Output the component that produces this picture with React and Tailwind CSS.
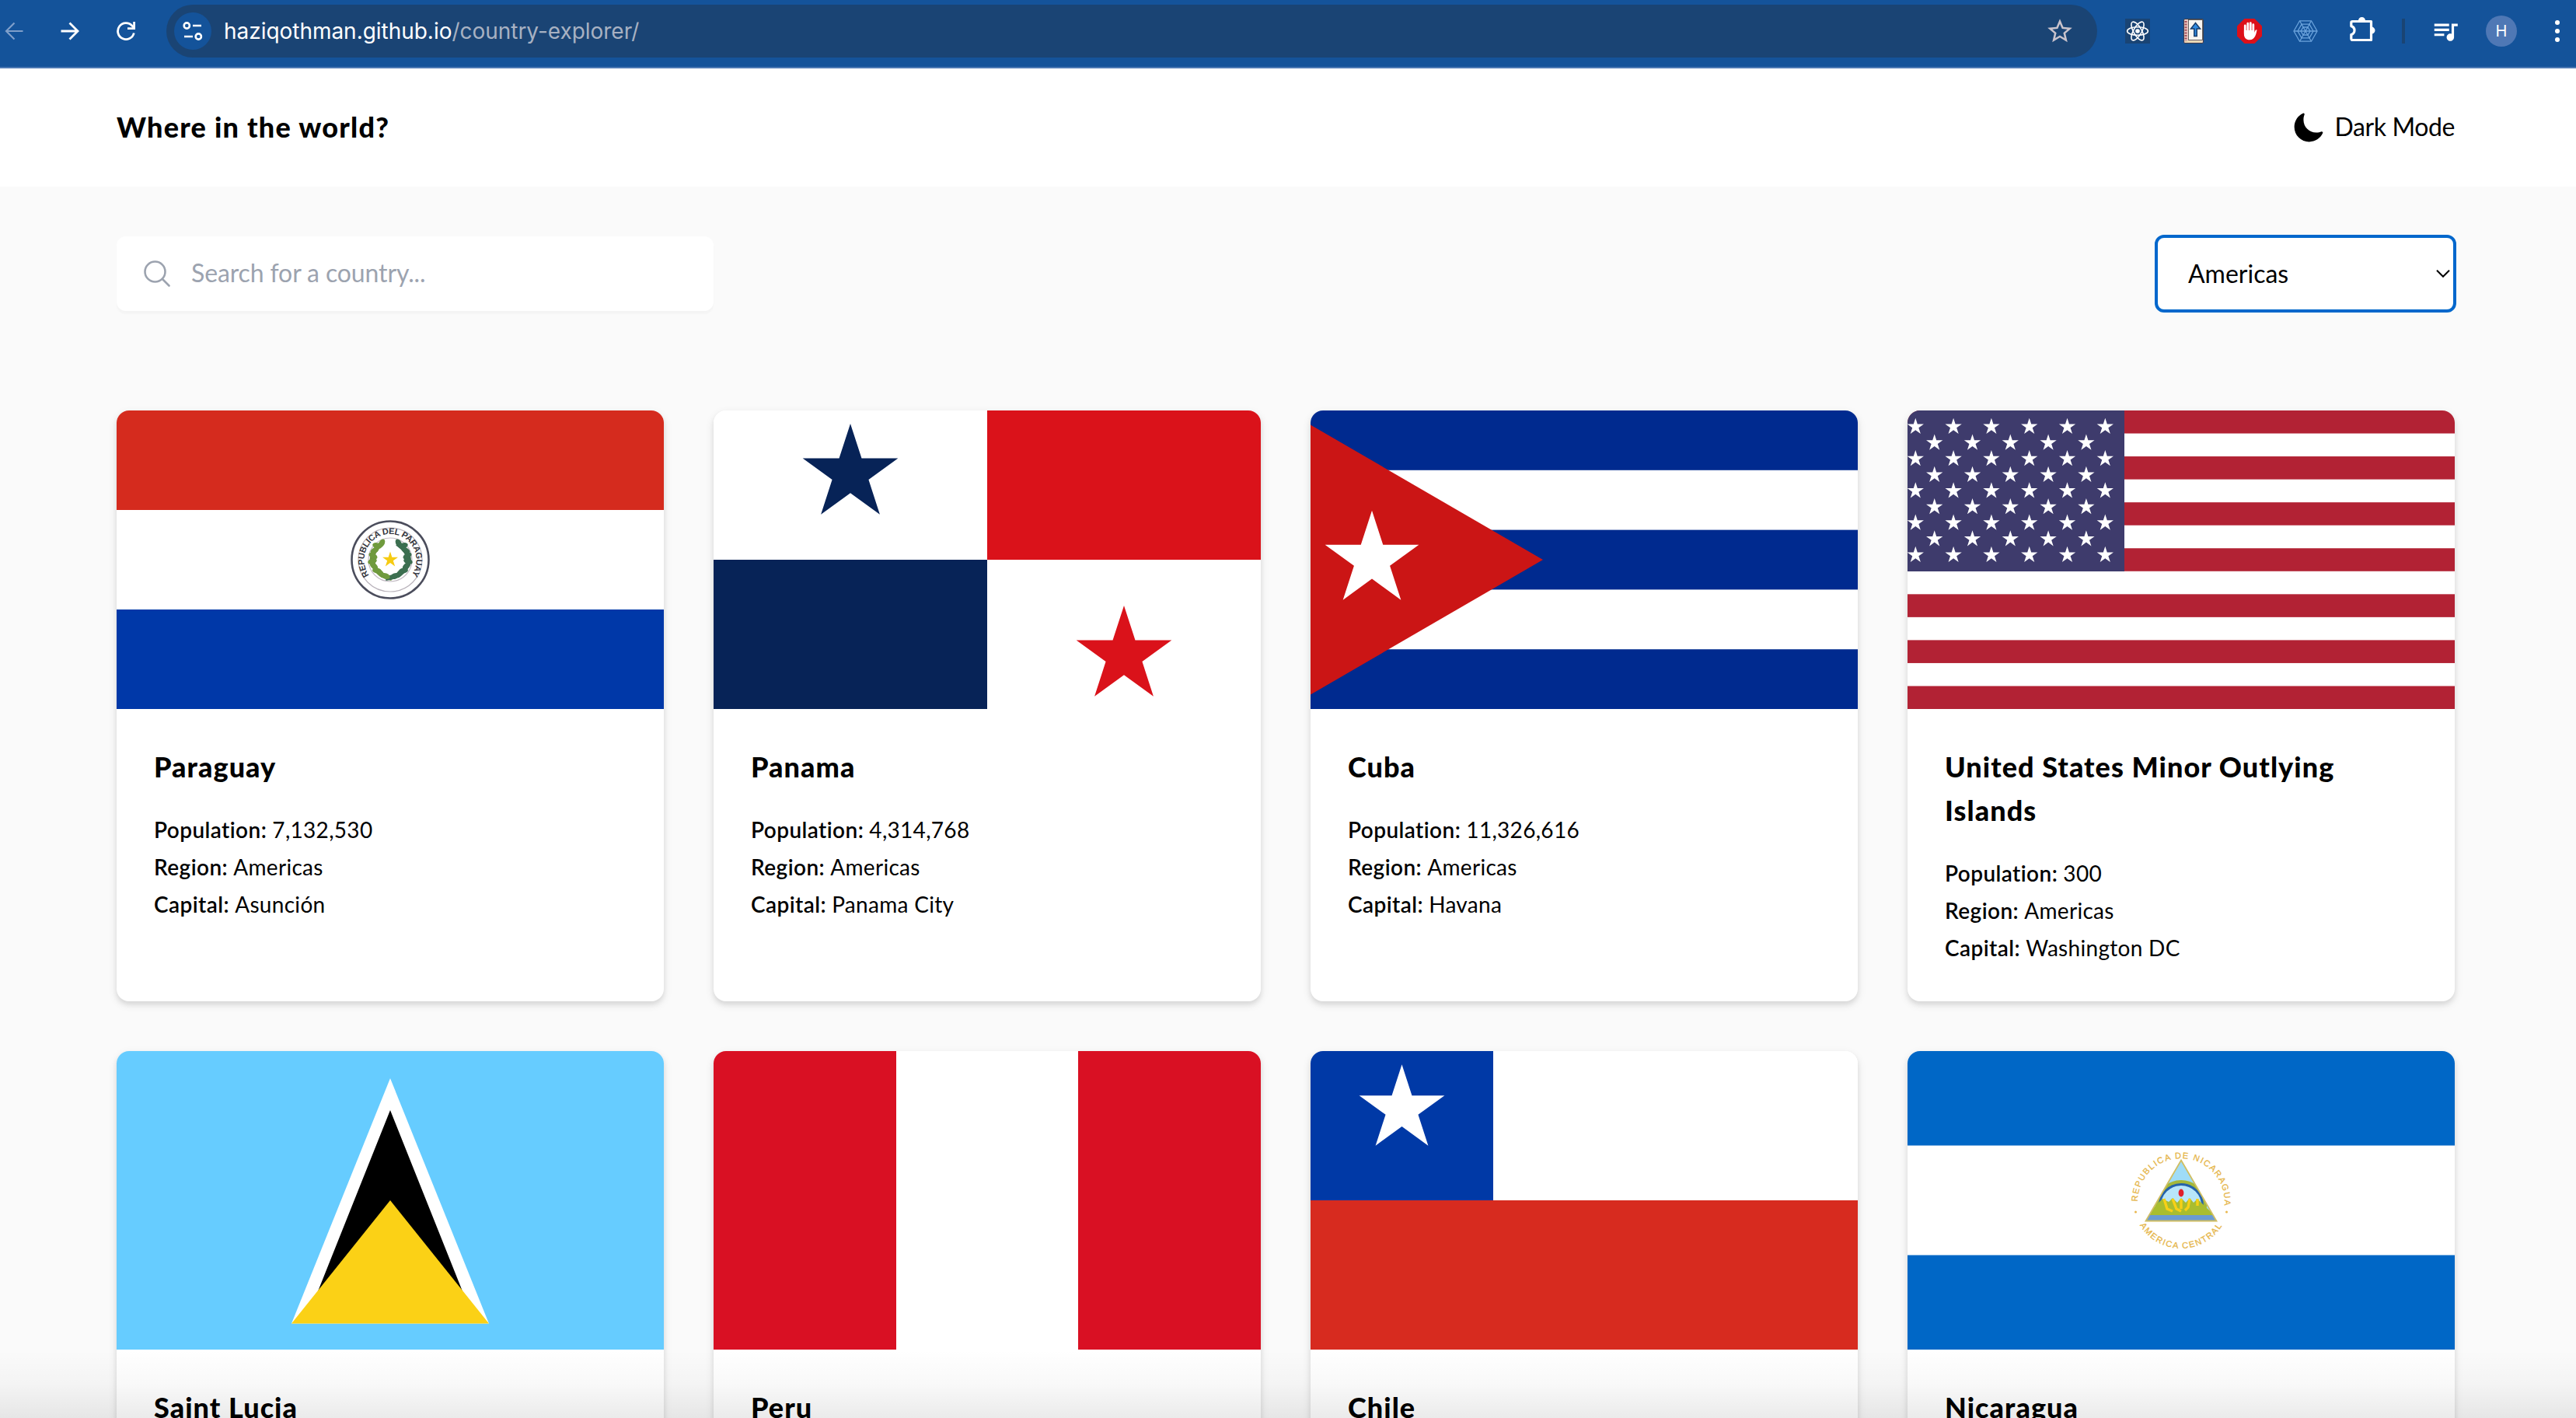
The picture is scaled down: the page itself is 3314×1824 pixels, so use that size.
import { IoMoon } from "react-icons/io5";
import { MdQueueMusic, MdStarBorder } from "react-icons/md";

function starPoints(cx, cy, r) {
  const points = [];
  for (let i = 0; i < 10; i++) {
    const radius = i % 2 === 0 ? r : r * 0.382;
    const angle = (Math.PI / 5) * i - Math.PI / 2;
    points.push(`${(cx + radius * Math.cos(angle)).toFixed(2)},${(cy + radius * Math.sin(angle)).toFixed(2)}`);
  }
  return points.join(" ");
}

function Star({ cx, cy, r, fill }) {
  return <polygon points={starPoints(cx, cy, r)} fill={fill} />;
}

/* ---------- Flags (704 x 384 canvas) ---------- */

function Flag({ label, children }) {
  return (
    <svg viewBox="0 0 704 384" className="block h-96 w-full" role="img" aria-label={label}>
      {children}
    </svg>
  );
}

function ParaguayFlag() {
  const leftLeaves = [
    [341, 171, -60], [335, 174, 20], [332, 180, -30], [330, 187, 30], [329, 194, -20],
    [331, 200, 40], [335, 206, 10], [340, 210, 50], [346, 213, 20],
  ];
  return (
    <Flag label="Flag of Paraguay">
      <rect width="704" height="384" fill="#fff" />
      <rect width="704" height="128" fill="#d52b1e" />
      <rect y="256" width="704" height="128" fill="#0038a8" />
      <circle cx="352" cy="192" r="49.5" fill="#fff" stroke="#4b4d5c" strokeWidth="2.6" />
      <circle cx="352" cy="192" r="41" fill="none" stroke="#b9b3bb" strokeWidth="1.2" />
      <circle cx="352" cy="192" r="28" fill="none" stroke="#c3bcc4" strokeWidth="1.2" />
      <path id="py-ring" d="M325.4 212.8 A33.5 33.5 0 1 1 378.6 212.8" fill="none" />
      <text fontSize="11" fontWeight="700" fill="#33343c" fontFamily="Liberation Sans, sans-serif">
        <textPath href="#py-ring" textLength="146" startOffset="1">REPUBLICA DEL PARAGUAY</textPath>
      </text>
      <path d="M341 171 Q318 190 338 209 Q344 214 354 216" fill="none" stroke="#6b8f3c" strokeWidth="6" />
      <path d="M361 171 Q388 190 366 209 Q360 214 346 216" fill="none" stroke="#3d6b50" strokeWidth="6" />
      {leftLeaves.map(([x, y, a], i) => (
        <g key={i}>
          <ellipse cx={x} cy={y} rx="6" ry="3.6" fill="#6f9a3d" transform={`rotate(${a} ${x} ${y})`} />
          <ellipse cx={704 - x} cy={y} rx="6" ry="3.6" fill="#3c6f50" transform={`rotate(${-a} ${704 - x} ${y})`} />
        </g>
      ))}
      <Star cx={352} cy={192} r={10.5} fill="#f6cb12" />
    </Flag>
  );
}

function PanamaFlag() {
  return (
    <Flag label="Flag of Panama">
      <rect width="704" height="384" fill="#fff" />
      <rect x="352" width="352" height="192" fill="#da121a" />
      <rect y="192" width="352" height="192" fill="#072357" />
      <Star cx={176} cy={81.5} r={64.5} fill="#072357" />
      <Star cx={528} cy={315.5} r={64.5} fill="#da121a" />
    </Flag>
  );
}

function CubaFlag() {
  return (
    <Flag label="Flag of Cuba">
      <rect width="704" height="384" fill="#002a8f" />
      <rect y="76.8" width="704" height="76.8" fill="#fff" />
      <rect y="230.4" width="704" height="76.8" fill="#fff" />
      <polygon points="0,18.5 299,192 0,365.5" fill="#cb1515" />
      <Star cx={79} cy={192.3} r={63.5} fill="#fff" />
    </Flag>
  );
}

function UnitedStatesFlag() {
  const stars = [];
  for (let row = 0; row < 9; row++) {
    const count = row % 2 === 0 ? 6 : 5;
    for (let col = 0; col < count; col++) {
      stars.push([10.3 + (row % 2 ? 24.4 : 0) + col * 48.8, 21 + row * 20.62]);
    }
  }
  return (
    <Flag label="Flag of the United States">
      <rect width="704" height="384" fill="#fff" />
      {[0, 1, 2, 3, 4, 5, 6].map((i) => (
        <rect key={i} y={i * 59.08} width="704" height="29.54" fill="#b22234" />
      ))}
      <rect width="279" height="207" fill="#3e3b6c" />
      {stars.map(([x, y], i) => (
        <Star key={i} cx={x} cy={y} r={11.2} fill="#fff" />
      ))}
    </Flag>
  );
}

function SaintLuciaFlag() {
  return (
    <Flag label="Flag of Saint Lucia">
      <rect width="704" height="384" fill="#66ccff" />
      <polygon points="352,35 479,350.5 225,350.5" fill="#fff" />
      <polygon points="352,76 447,314 352,250 257,314" fill="#000" />
      <polygon points="352,192 479,350.5 225,350.5" fill="#fbd116" />
    </Flag>
  );
}

function PeruFlag() {
  return (
    <Flag label="Flag of Peru">
      <rect width="704" height="384" fill="#d91023" />
      <rect x="235" width="234" height="384" fill="#fff" />
    </Flag>
  );
}

function ChileFlag() {
  return (
    <Flag label="Flag of Chile">
      <rect width="704" height="384" fill="#fff" />
      <rect width="235" height="192" fill="#0039a6" />
      <rect y="192" width="704" height="192" fill="#d72b1f" />
      <Star cx={117.5} cy={75} r={57.7} fill="#fff" />
    </Flag>
  );
}

function NicaraguaFlag() {
  return (
    <Flag label="Flag of Nicaragua">
      <rect width="704" height="384" fill="#fff" />
      <rect width="704" height="121.5" fill="#0067c6" />
      <rect y="262.5" width="704" height="121.5" fill="#0067c6" />
      <path id="ni-top" d="M296.3 199.8 A56 56 0 1 1 407.7 199.8" fill="none" />
      <path id="ni-bottom" d="M297 220.5 A62 62 0 0 0 407 220.5" fill="none" />
      <g fontSize="11" fill="#e6b548" stroke="#e6b548" strokeWidth=".3" fontFamily="Liberation Sans, sans-serif">
        <text>
          <textPath href="#ni-top" startOffset="6" textLength="180">REPUBLICA DE NICARAGUA</textPath>
        </text>
        <text>
          <textPath href="#ni-bottom" startOffset="4" textLength="126">AMERICA CENTRAL</textPath>
        </text>
      </g>
      <circle cx="293.5" cy="207" r="1.5" fill="#e8b64c" />
      <circle cx="410.5" cy="207" r="1.5" fill="#e8b64c" />
      <clipPath id="ni-clip">
        <polygon points="352,141 397,218 307,218" />
      </clipPath>
      <g clipPath="url(#ni-clip)">
        <rect x="300" y="136" width="104" height="84" fill="#9fdcf7" />
        <circle cx="352" cy="199" r="30.5" fill="#b8e6fa" stroke="#a4b83a" strokeWidth="5" />
        <circle cx="352" cy="199" r="27.5" fill="none" stroke="#2563ab" strokeWidth="3" />
        <path
          d="M306 214 L318 200 L328 190 L336 194 L341 189 L347 195 L352 189 L358 195 L363 189 L368 195 L373 190 L384 201 L398 214Z"
          fill="#a9bd2f"
        />
        <path
          d="M330 190 L334 203 L341 206 M341 190 L346 203 L352 206 M352 190 L352 203 M363 190 L361 201 L357 205 M373 190 L373 199"
          fill="none"
          stroke="#f8d016"
          strokeWidth="3.4"
        />
        <rect x="300" y="211" width="104" height="8" fill="#6a9bd1" />
      </g>
      <ellipse cx="352" cy="182.5" rx="3.4" ry="5" fill="#e0202a" />
      <polygon points="352,140.5 397.5,218.5 306.5,218.5" fill="none" stroke="#d0be62" strokeWidth="1.8" />
    </Flag>
  );
}

/* ---------- Browser toolbar ---------- */

function BackIcon({ className }) {
  return (
    <svg viewBox="0 0 24 24" fill="none" stroke="currentColor" strokeWidth="2.2" className={className}>
      <path d="M23.5 12H2M12.5 1.5 2 12l10.5 10.5" />
    </svg>
  );
}

function ForwardIcon({ className }) {
  return (
    <svg viewBox="0 0 24 24" fill="none" stroke="currentColor" strokeWidth="2.8" className={className}>
      <path d="M.5 12H22M11.5 1.5 22 12 11.5 22.5" />
    </svg>
  );
}

function ReloadIcon({ className }) {
  return (
    <svg viewBox="0 0 24 24" fill="none" stroke="currentColor" strokeWidth="2.8" className={className}>
      <path d="M22.3 14.5A10.5 10.5 0 1 1 20 5.2L22.5 8" />
      <path d="M22.6 0v8.6H14" />
    </svg>
  );
}

function TuneIcon({ className }) {
  return (
    <svg viewBox="0 0 26 26" fill="none" stroke="currentColor" strokeWidth="2.6" className={className}>
      <circle cx="5.3" cy="6" r="3.6" />
      <path d="M13 6h11M2 20h11" />
      <circle cx="20.3" cy="20" r="3.6" />
    </svg>
  );
}

function ReactExtensionIcon() {
  return (
    <svg viewBox="0 0 32 32" className="size-8">
      <rect width="32" height="32" fill="#1a4474" />
      <g fill="none" stroke="#fff" strokeWidth="1.6">
        <ellipse cx="16" cy="16" rx="13.4" ry="5.2" />
        <ellipse cx="16" cy="16" rx="13.4" ry="5.2" transform="rotate(60 16 16)" />
        <ellipse cx="16" cy="16" rx="13.4" ry="5.2" transform="rotate(120 16 16)" />
      </g>
      <circle cx="16" cy="16" r="2.8" fill="#fff" />
    </svg>
  );
}

function NotebookIcon() {
  return (
    <svg viewBox="0 0 26 32" className="h-8 w-[26px]">
      <rect x=".5" y=".5" width="25" height="31" rx="1.5" fill="#e9c9c4" stroke="#3c3f4c" />
      <path d="M3 3v26" stroke="#a4505a" strokeWidth="3" strokeDasharray="2 1.6" />
      <rect x="6.5" y="1.5" width="18" height="26" fill="#f7f5f1" stroke="#444" strokeWidth=".8" />
      <path d="M2 29.5h22" stroke="#e9dfb0" strokeWidth="1.6" />
      <path d="M15.5 5.5 21.5 13h-4.3v9.5h-3.4V13H9.5z" fill="#2f8ae0" stroke="#173d6b" strokeWidth="1.5" />
    </svg>
  );
}

function AdBlockIcon() {
  return (
    <svg viewBox="0 0 32 32" className="size-8">
      <path d="M9.5 0h13L32 9.5v13L22.5 32h-13L0 22.5v-13z" fill="#dd1019" />
      <g stroke="#fff" strokeWidth="2.8" strokeLinecap="round">
        <path d="M10.3 9v10M13.8 6.2V18M17.3 5.7V18M20.8 7.7V18" />
      </g>
      <path
        d="M8.9 15h13.3v3l1.2-2.7c.6-1.1 1.9-1.4 2.1-.6-.8 4.4-2.5 12.6-9.3 12.6-5 0-7.3-3.2-7.3-7.3z"
        fill="#fff"
      />
    </svg>
  );
}

function WebIcon() {
  return (
    <svg viewBox="0 0 32 32" fill="none" stroke="#6ba3dc" strokeWidth="1.3" className="size-8">
      <path d="M8.5 2.8h15L31 16l-7.5 13.2h-15L1 16z" />
      <path d="M11 7.2h10l5 8.8-5 8.8H11L6 16z" />
      <path d="M13 11h6l3 5-3 5h-6l-3-5z" />
      <path d="M1 16h30M8.5 2.8l15 26.4M23.5 2.8l-15 26.4" />
    </svg>
  );
}

function PuzzleIcon() {
  return (
    <svg viewBox="0 0 34 34" fill="none" className="size-[34px]">
      <path
        d="M4.5 6.5H28.5V30.5H4.5c-1 0-1.7-.7-1.7-1.7V23.6c2.7-.8 4.2-2.9 4.2-5.5s-1.5-4.7-4.2-5.5V8.2c0-1 .7-1.7 1.7-1.7z"
        stroke="#fff"
        strokeWidth="3.2"
        strokeLinejoin="round"
      />
      <path d="M12 5.5a4.5 4.5 0 0 1 9 0zM29 13.6a4.5 4.5 0 0 1 0 9z" fill="#fff" />
    </svg>
  );
}

function BrowserToolbar() {
  return (
    <div className="flex h-[88px] items-start border-b-2 border-[#4c79b4] bg-[#14539a] pt-1.5 text-white">
      <div className="flex h-[68px] w-[214px] shrink-0 items-center gap-12 pl-1.5">
        <BackIcon className="size-6 text-[#7f9fca]" />
        <ForwardIcon className="size-6" />
        <ReloadIcon className="size-6" />
      </div>
      <div className="flex h-[68px] w-[2484px] shrink-0 items-center rounded-full bg-[#1a4474] pl-2.5 pr-[29px]">
        <div className="flex size-12 items-center justify-center rounded-full bg-[#14539a]">
          <TuneIcon className="size-[26px]" />
        </div>
        <p className="ml-4 flex-1 font-['Inter',sans-serif] text-[28px] leading-none tracking-[-0.03px] text-white">
          haziqothman.github.io<span className="text-[#a7b1c2]">/country-explorer/</span>
        </p>
        <MdStarBorder className="size-[38px] text-[#c9c3cc]" />
      </div>
      <div className="flex h-[68px] items-center">
        <div className="ml-9 flex">
          <ReactExtensionIcon />
        </div>
        <div className="ml-[43px] flex">
          <NotebookIcon />
        </div>
        <div className="ml-[43px] flex">
          <AdBlockIcon />
        </div>
        <div className="ml-10 flex">
          <WebIcon />
        </div>
        <div className="mb-1 ml-10 flex">
          <PuzzleIcon />
        </div>
        <div className="ml-[34px] h-8 w-1 bg-[#1a4474]" />
        <MdQueueMusic className="ml-[33px] size-[38px]" />
        <div className="ml-[33px] flex size-10 items-center justify-center rounded-full bg-[#4f78b5] font-['Inter',sans-serif] text-[20px]">
          H
        </div>
        <div className="ml-[49px] flex flex-col gap-[5px]">
          <span className="size-1.5 rounded-full bg-white" />
          <span className="size-1.5 rounded-full bg-white" />
          <span className="size-1.5 rounded-full bg-white" />
        </div>
      </div>
    </div>
  );
}

/* ---------- Page ---------- */

function Header() {
  return (
    <header className="flex h-[152px] items-center justify-between bg-white pb-[3px] pl-[150px] pr-[156px]">
      <h1 className="text-4xl font-black tracking-[1.25px]">Where in the world?</h1>
      <button className="flex items-center gap-[13px] text-[32px] leading-none tracking-[-0.4px]">
        <IoMoon className="mt-0.5 size-[42px]" />
        Dark Mode
      </button>
    </header>
  );
}

function Filters() {
  return (
    <div className="flex justify-between">
      <label className="flex h-24 w-3xl items-center gap-[27px] rounded-xl bg-white pl-[35px] shadow-[0_4px_2px_rgba(0,0,0,0.025)]">
        <svg viewBox="0 0 34 34" fill="none" stroke="#9ca3af" strokeWidth="2.6" strokeLinecap="round" className="size-[34px]">
          <circle cx="14.5" cy="14.5" r="13" />
          <path d="m24 24 8.5 8.5" />
        </svg>
        <span className="pb-0.5 text-[32px] leading-none tracking-[-0.12px] text-[#9ca3af]">Search for a country...</span>
      </label>
      <div className="flex h-24 w-96 items-center justify-between rounded-[10px] bg-white pl-[41px] pr-1.5 outline-4 -outline-offset-2 outline-[#0067cc]">
        <span className="pb-px text-[32px] leading-none">Americas</span>
        <svg viewBox="0 0 18 10" fill="none" stroke="#000" strokeWidth="2" className="h-2.5 w-[18px]">
          <path d="m1 .8 8 8 8-8" />
        </svg>
      </div>
    </div>
  );
}

function Fact({ label, value }) {
  return (
    <p className="text-[28px] leading-[40px]">
      <span className="font-semibold tracking-[0.42px]">{label}:</span>{" "}
      <span className="tracking-[0.3px]">{value}</span>
    </p>
  );
}

const countries = [
  { name: "Paraguay", population: "7,132,530", capital: "Asunción", FlagArt: ParaguayFlag },
  { name: "Panama", population: "4,314,768", capital: "Panama City", FlagArt: PanamaFlag },
  { name: "Cuba", population: "11,326,616", capital: "Havana", FlagArt: CubaFlag },
  {
    name: "United States Minor Outlying Islands",
    population: "300",
    capital: "Washington DC",
    FlagArt: UnitedStatesFlag,
  },
  { name: "Saint Lucia", FlagArt: SaintLuciaFlag },
  { name: "Peru", FlagArt: PeruFlag },
  { name: "Chile", FlagArt: ChileFlag },
  { name: "Nicaragua", FlagArt: NicaraguaFlag },
];

function CountryCard({ name, population, capital, FlagArt }) {
  return (
    <article className="min-h-[704px] overflow-hidden rounded-2xl bg-white shadow-[0_4px_12px_rgba(0,0,0,0.1),0_4px_6px_rgba(0,0,0,0.07)]">
      <FlagArt />
      <div className="px-12 pb-[49px] pt-[46px]">
        <h2 className="max-w-[560px] text-4xl font-black leading-[56px] tracking-[1.05px]">{name}</h2>
        {population && (
          <div className="mt-[33px] flex flex-col gap-2">
            <Fact label="Population" value={population} />
            <Fact label="Region" value="Americas" />
            <Fact label="Capital" value={capital} />
          </div>
        )}
      </div>
    </article>
  );
}

export default function App() {
  return (
    <div className="relative h-[1824px] w-[3314px] overflow-hidden bg-[#fafafa] font-['Lato',sans-serif] text-black">
      <BrowserToolbar />
      <Header />
      <main className="pl-[150px] pr-[156px] pt-16">
        <Filters />
        <section className="mt-32 grid grid-cols-4 gap-16">
          {countries.map((country) => (
            <CountryCard key={country.name} {...country} />
          ))}
        </section>
      </main>
      <div className="pointer-events-none absolute inset-x-0 bottom-0 h-[88px] bg-linear-to-b from-transparent via-black/[0.025] to-black/[0.08]" />
    </div>
  );
}
